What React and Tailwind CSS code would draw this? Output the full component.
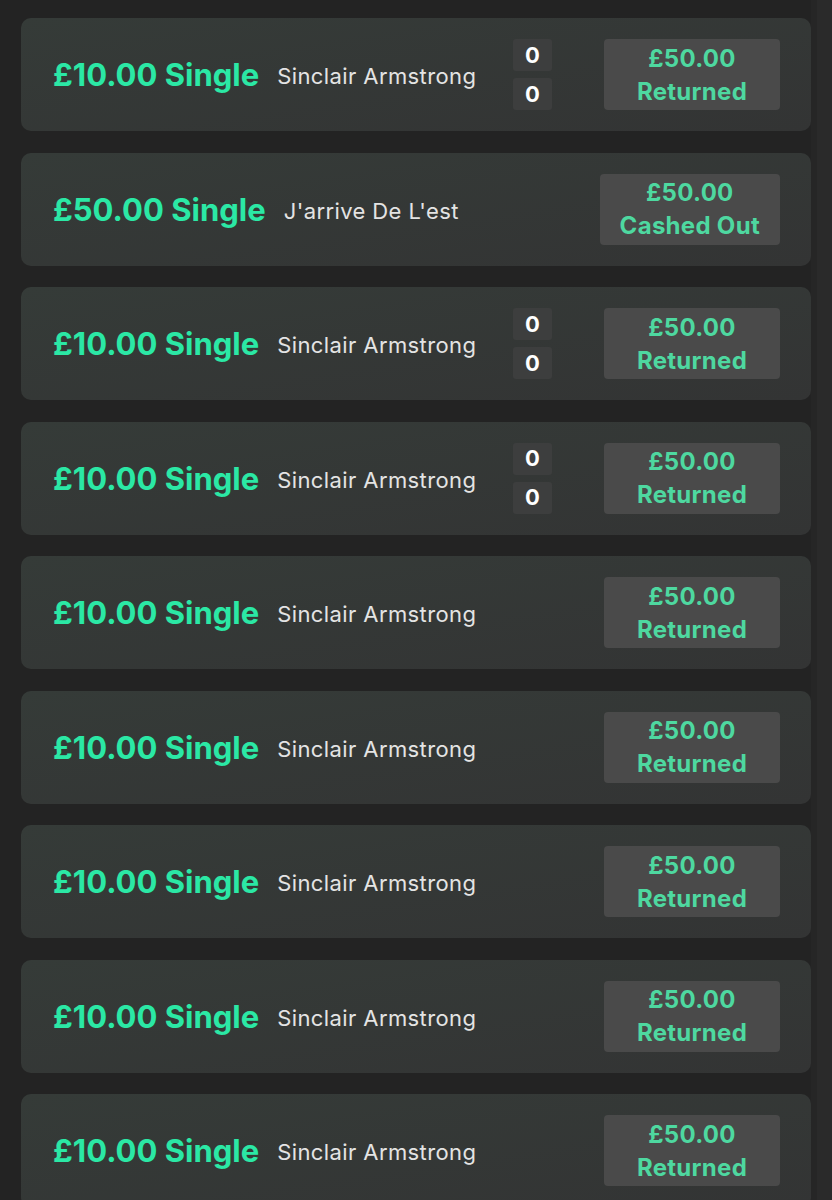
import React from "react";

const bets = [
  { stake: "£10.00", name: "Sinclair Armstrong", score: true, amount: "£50.00", status: "Returned" },
  { stake: "£50.00", name: "J'arrive De L'est", score: false, amount: "£50.00", status: "Cashed Out" },
  { stake: "£10.00", name: "Sinclair Armstrong", score: true, amount: "£50.00", status: "Returned" },
  { stake: "£10.00", name: "Sinclair Armstrong", score: true, amount: "£50.00", status: "Returned" },
  { stake: "£10.00", name: "Sinclair Armstrong", score: false, amount: "£50.00", status: "Returned" },
  { stake: "£10.00", name: "Sinclair Armstrong", score: false, amount: "£50.00", status: "Returned" },
  { stake: "£10.00", name: "Sinclair Armstrong", score: false, amount: "£50.00", status: "Returned" },
  { stake: "£10.00", name: "Sinclair Armstrong", score: false, amount: "£50.00", status: "Returned" },
  { stake: "£10.00", name: "Sinclair Armstrong", score: false, amount: "£50.00", status: "Returned" },
];

const BetCard = ({ bet }) => {
  return (
    <div className="h-[113px] shrink-0 flex items-center rounded-[10px] bg-gradient-to-br from-[#353b38] to-[#333434] pl-[32px] pr-[31px]">
      <span className="text-[31px] font-bold text-[#2be8a5] leading-none">
        {bet.stake} Single
      </span>
      <span className="ml-[18px] mt-[3px] text-[22px] text-[#e4e4e4] leading-none tracking-[0.4px]">
        {bet.name}
      </span>
      <div className="ml-auto flex items-center">
        {bet.score && (
          <div className="flex flex-col gap-[7px] mr-[52px]">
            <div className="w-[39px] h-[32px] rounded-[3px] bg-[#3d3e3e] flex items-center justify-center text-[22px] font-bold text-white">
              0
            </div>
            <div className="w-[39px] h-[32px] rounded-[3px] bg-[#3d3e3e] flex items-center justify-center text-[22px] font-bold text-white">
              0
            </div>
          </div>
        )}
        <div className="min-w-[176px] h-[71px] px-[20px] rounded-[4px] bg-[#4a4a4a] flex flex-col items-center justify-center text-[24px] font-bold text-[#4ed8a0] leading-[33px] tracking-[0.3px]">
          <span>{bet.amount}</span>
          <span>{bet.status}</span>
        </div>
      </div>
    </div>
  );
};

const App = () => {
  return (
    <div
      className="w-[832px] h-[1200px] overflow-hidden bg-[#232323] flex"
      style={{ fontFamily: "Inter, 'Noto Sans', 'Liberation Sans', sans-serif" }}
    >
      <div className="w-[811px] pl-[21px] pt-[18px] flex flex-col gap-[21.5px]">
        {bets.map((bet, index) => (
          <BetCard bet={bet} key={index} />
        ))}
      </div>
      <div className="flex-1 border-l-[6px] border-[#262626] bg-[#2a2a2a]" />
    </div>
  );
};

export default App;
